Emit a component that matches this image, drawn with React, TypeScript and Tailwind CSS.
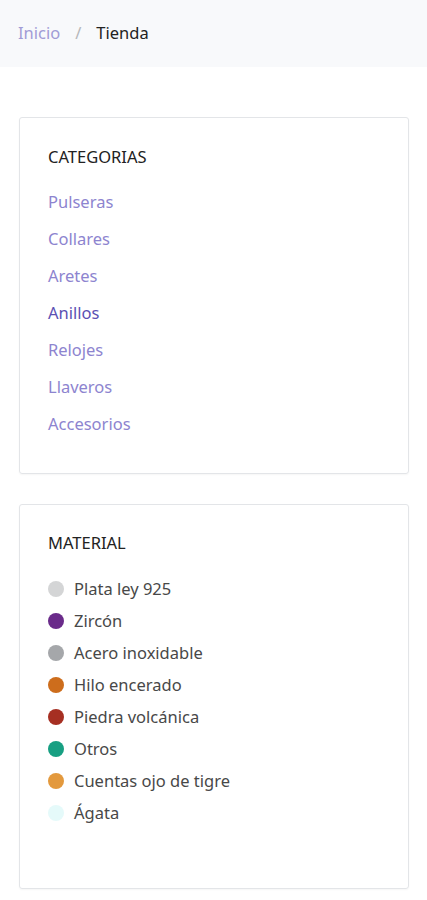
import React from 'react';

const categories = [
  { name: 'Pulseras', active: false },
  { name: 'Collares', active: false },
  { name: 'Aretes', active: false },
  { name: 'Anillos', active: true },
  { name: 'Relojes', active: false },
  { name: 'Llaveros', active: false },
  { name: 'Accesorios', active: false },
];

const materials = [
  { name: 'Plata ley 925', color: '#d4d5d6' },
  { name: 'Zircón', color: '#6a2b8a' },
  { name: 'Acero inoxidable', color: '#a5a7aa' },
  { name: 'Hilo encerado', color: '#cd6d1c' },
  { name: 'Piedra volcánica', color: '#a62f22' },
  { name: 'Otros', color: '#179f82' },
  { name: 'Cuentas ojo de tigre', color: '#e3993d' },
  { name: 'Ágata', color: '#e5fafa' },
];

const App: React.FC = () => {
  return (
    <div className="min-h-screen bg-white" style={{ fontFamily: '"Noto Sans", "Open Sans", sans-serif' }}>
      {/* Breadcrumb */}
      <div className="h-[67px] bg-[#f8f9fb] flex items-center px-[18px] text-[16.5px]">
        <a className="text-[#a19cd6]">Inicio</a>
        <span className="text-[#b5b7ba] mx-[15px]">/</span>
        <span className="text-[#222]">Tienda</span>
      </div>

      <div className="pl-[19px] pr-[18px] pt-[50px] pb-[12px] flex flex-col gap-[30px]">
        {/* Categorias */}
        <div className="border border-[#e3e5e8] rounded-[3px] shadow-[0_1px_2px_rgba(0,0,0,0.04)] pl-[28px] pt-[28px] pb-[30px]">
          <h3 className="text-[16.5px] leading-[22px] text-[#222] uppercase">Categorias</h3>
          <ul className="mt-[16px]">
            {categories.map(c => (
              <li key={c.name} className="h-[37px] flex items-center">
                <a className={`text-[16.5px] ${c.active ? 'text-[#5b50b3]' : 'text-[#8d84cf]'}`}>{c.name}</a>
              </li>
            ))}
          </ul>
        </div>

        {/* Material */}
        <div className="border border-[#e3e5e8] rounded-[3px] shadow-[0_1px_2px_rgba(0,0,0,0.04)] pl-[28px] pt-[27px] pb-[59px]">
          <h3 className="text-[16.5px] leading-[22px] text-[#222] uppercase">Material</h3>
          <ul className="mt-[19px]">
            {materials.map(m => (
              <li key={m.name} className="h-[32px] flex items-center gap-[10px]">
                <span className="w-[16px] h-[16px] rounded-full shrink-0" style={{ backgroundColor: m.color }}></span>
                <span className="text-[16.5px] text-[#484848]">{m.name}</span>
              </li>
            ))}
          </ul>
        </div>
      </div>
    </div>
  );
};

export default App;
